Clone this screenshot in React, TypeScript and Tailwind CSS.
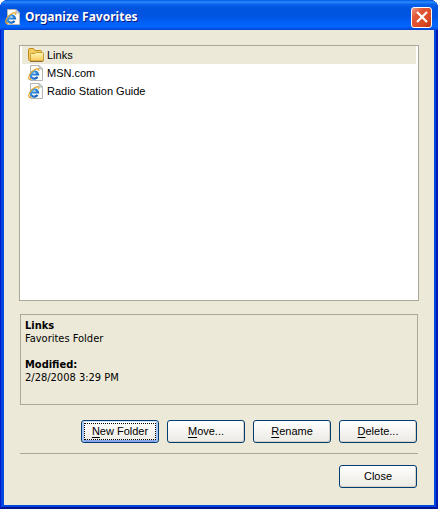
import React, { useId, useState } from "react";

function PageIcon({ className = "" }: { className?: string }) {
  const id = useId();
  return (
    <svg viewBox="0 0 16 16" className={className} aria-hidden="true">
      <defs>
        <linearGradient id={id} x1="0" y1="0" x2="1" y2="1">
          <stop offset="0" stopColor="#3fa9f0" />
          <stop offset="1" stopColor="#1459b8" />
        </linearGradient>
      </defs>
      <path d="M2.500 .5h8.500l3.500 3.500v11.500h-12z" fill="#fbfbf8" stroke="#b4b6b6" />
      <path d="M11 .5v3.500h3.500z" fill="#e2e4e4" stroke="#a5a8a8" strokeWidth=".8" />
      <path d="M9.500 11.900a3.700 3.700 0 1 1 .5-2.400H3" fill="none" stroke={`url(#${id})`} strokeWidth="2.200" />
      <path
        d="M3.400 14.200C-.6 15.400 .2 10.300 4 6.600c3.400-3.200 7.200-4 6.600-.8"
        fill="none"
        stroke="#e9a52a"
        strokeWidth="1.300"
      />
    </svg>
  );
}

function FolderIcon({ className = "" }: { className?: string }) {
  const id = useId();
  return (
    <svg viewBox="0 0 16 16" className={className} aria-hidden="true">
      <defs>
        <linearGradient id={id} x1="0" y1="0" x2="0" y2="1">
          <stop offset="0" stopColor="#fff8b4" />
          <stop offset="1" stopColor="#f5c959" />
        </linearGradient>
      </defs>
      <path d="M.5 12.500v-9.500q0-1.500 1.500-1.500h3.500l1.500 2h5.500q1 0 1 1v9h-11.500q-1.500 0-1.500-1z" fill="#f3cd62" stroke="#c08a1c" />
      <path d="M2.500 13.500v-6q0-1 1-1h3.500l1-1h6.500q1 0 1 1v6.500q0 1-1 1h-12z" fill={`url(#${id})`} stroke="#c99a2c" />
      <path d="M2 14.500h12.500l1-1" fill="none" stroke="#8a7038" />
    </svg>
  );
}

function DialogButton({ hotkey = "", label, focused = false }: { hotkey?: string; label: string; focused?: boolean }) {
  return (
    <button
      type="button"
      className={`flex h-[23px] w-[78px] items-center justify-center rounded-[3px] border border-[#003c74] bg-gradient-to-b from-white to-[#eceae3] p-[2px] text-[11px] leading-[13px] text-black ${
        focused ? "shadow-[inset_0_1px_0_#cee7ff,inset_2px_0_0_#a9c5f3,inset_-2px_0_0_#a9c5f3,inset_0_-2px_0_#8aa5ea]" : "shadow-[inset_-1px_-1px_0_#d6d0c5]"
      }`}
    >
      <span className={`flex h-full w-full items-center justify-center border border-dotted ${focused ? "border-black" : "border-transparent"}`}>
        <span>
          {hotkey && <span className="underline underline-offset-2">{hotkey}</span>}
          {label}
        </span>
      </span>
    </button>
  );
}

const favorites = [
  { name: "Links", folder: true },
  { name: "MSN.com", folder: false },
  { name: "Radio Station Guide", folder: false },
];

export default function App() {
  const [selected, setSelected] = useState("Links");
  return (
    <div className="bg-white font-['Liberation_Sans',Arial,sans-serif] text-[11px] text-black">
      <section
        aria-label="Organize Favorites"
        className="flex min-h-screen flex-col rounded-t-lg bg-[#0046e0] px-1 pb-1 shadow-[inset_1px_0_0_#0019cf,inset_-2px_0_0_#0019b0,inset_0_-2px_0_#00138c]"
      >
        <header className="-mx-1 flex h-[30px] items-center gap-1 rounded-t-lg bg-[linear-gradient(to_bottom,#0058e0_0%,#2b8cff_7%,#0a63ec_14%,#0054e0_28%,#0054e3_55%,#0063fb_80%,#0064ff_90%,#0042cc_100%)] pr-[6px] pl-[5px] pt-1">
          <PageIcon className="size-4" />
          <h1 className="flex-1 font-['Noto_Sans','Open_Sans',sans-serif] text-[12px] leading-4 font-bold text-white [text-shadow:1px_1px_0_#0a1883]">
            Organize Favorites
          </h1>
          <button
            type="button"
            aria-label="Close window"
            className="flex size-[21px] items-center justify-center rounded-[3px] border border-white bg-[linear-gradient(135deg,#ee9a80_0%,#e2593a_30%,#dc4a24_70%,#bd3410_100%)]"
          >
            <svg viewBox="0 0 12 12" className="size-3" aria-hidden="true">
              <path d="M1 1l10 10M11 1l-10 10" stroke="white" strokeWidth="2.200" />
            </svg>
          </button>
        </header>

        <div className="flex flex-1 flex-col bg-[#ece9d8] px-4 pt-[15px] pb-[17px]">
          <ul className="-mx-px min-h-24 flex-1 border border-[#aca899] bg-white px-[2px]">
            {favorites.map((item) => (
              <li key={item.name}>
                <button
                  type="button"
                  onClick={() => setSelected(item.name)}
                  className={`flex h-[18px] w-full items-center gap-[3px] pl-[6px] text-left text-[11px] leading-[18px] ${
                    item.name === selected ? "bg-[#ece9d8]" : ""
                  }`}
                >
                  {item.folder ? <FolderIcon className="size-4" /> : <PageIcon className="size-4" />}
                  {item.name}
                </button>
              </li>
            ))}
          </ul>

          <div className="mt-[13px] h-[91px] border border-[#aca899] px-1 pt-1 font-['DejaVu_Sans_Condensed','Noto_Sans',sans-serif] leading-[13px]">
            <p className="font-bold">Links</p>
            <p>Favorites Folder</p>
            <p className="mt-[13px] font-bold">Modified:</p>
            <p>2/28/2008 3:29 PM</p>
          </div>

          <div className="mt-[15px] flex justify-end gap-2 pr-px">
            <DialogButton hotkey="N" label="ew Folder" focused />
            <DialogButton hotkey="M" label="ove..." />
            <DialogButton hotkey="R" label="ename" />
            <DialogButton hotkey="D" label="elete..." />
          </div>
          <hr className="mt-[10px] border-t border-[#aca899]" />
          <div className="mt-[11px] flex justify-end pr-px">
            <DialogButton label="Close" />
          </div>
        </div>
      </section>
    </div>
  );
}
